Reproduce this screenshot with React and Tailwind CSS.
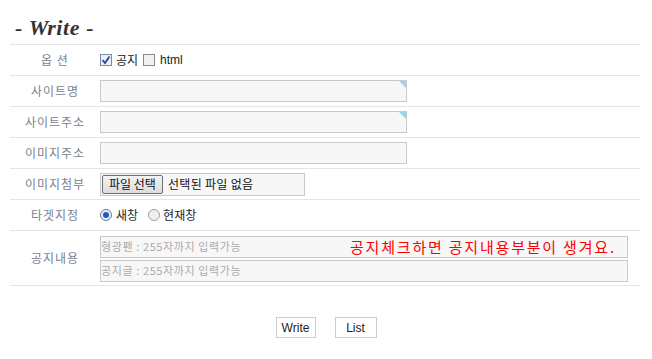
import React from "react";

const font = { fontFamily: '"Noto Sans CJK KR", "Noto Sans", sans-serif' };

function Row({ label, children, h = "h-[31px]" }) {
  return (
    <div className={`flex items-center border-b border-[#e5e5e5] ${h}`}>
      <div className="w-[90px] text-center text-[12px] text-[#7a8290] tracking-[1px]">{label}</div>
      <div className="flex-1 flex items-center">{children}</div>
    </div>
  );
}

function Field({ w = "w-[307px]", corner = false }) {
  return (
    <div className={`relative ${w} h-[22px] bg-[#f7f7f7] border border-[#c9c9c9]`}>
      {corner && (
        <div className="absolute top-0 right-0 w-0 h-0 border-t-[7px] border-t-[#8fd8f0] border-l-[7px] border-l-transparent" />
      )}
    </div>
  );
}

export default function App() {
  return (
    <div className="w-[652px] h-[359px] bg-white" style={font}>
      <div className="px-[10px]">
        <div className="h-[44px] pl-[5px] pt-[16px]">
          <span
            className="text-[22px] font-bold italic text-[#333] leading-none tracking-[0.6px]"
            style={{ fontFamily: '"Liberation Serif", serif' }}
          >
            - Write -
          </span>
        </div>
        <div className="w-[630px] border-t border-[#e5e5e5]">
          <Row label="옵 션">
            <div className="flex items-center text-[12px] text-[#222]">
              <span className="w-[12px] h-[12px] border border-[#7b8aa8] bg-[#eef1f8] flex items-center justify-center">
                <svg width="10" height="10" viewBox="0 0 10 10">
                  <path d="M1.5 5 L4 8 L8.5 1.5" stroke="#2a3f9a" strokeWidth="1.8" fill="none" />
                </svg>
              </span>
              <span className="ml-[4px]">공지</span>
              <span className="ml-[5px] w-[12px] h-[12px] border border-[#8a8a8a] bg-[#f0f0f0]" />
              <span className="ml-[5px]" style={{ fontFamily: '"Liberation Sans", sans-serif' }}>html</span>
            </div>
          </Row>
          <Row label="사이트명">
            <Field corner />
          </Row>
          <Row label="사이트주소">
            <Field corner />
          </Row>
          <Row label="이미지주소">
            <Field />
          </Row>
          <Row label="이미지첨부">
            <div className="w-[205px] h-[23px] bg-[#f7f7f7] border border-[#c9c9c9] flex items-center text-[12px] text-[#111]">
              <span className="ml-[1px] h-[19px] w-[61px] flex items-center justify-center border border-[#6f6f6f] rounded-[2px] bg-gradient-to-b from-[#f4f4f4] to-[#dcdcdc]">
                파일 선택
              </span>
              <span className="ml-[5px] tracking-[0.3px]">선택된 파일 없음</span>
            </div>
          </Row>
          <Row label="타겟지정">
            <div className="flex items-center text-[12px] text-[#222]">
              <span className="w-[12px] h-[12px] rounded-full border border-[#6b7f9f] bg-[#e8eef6] flex items-center justify-center">
                <span className="w-[6px] h-[6px] rounded-full bg-[#1d5fb0]" />
              </span>
              <span className="ml-[4px]">새창</span>
              <span className="ml-[10px] w-[12px] h-[12px] rounded-full border border-[#a0a0a0] bg-[#eee]" />
              <span className="ml-[3px]">현재창</span>
            </div>
          </Row>
          <Row label="공지내용" h="h-[55px]">
            <div className="flex flex-col gap-[2px] pt-[1px]">
              <div className="relative w-[528px] h-[22px] bg-[#f7f7f7] border border-[#c9c9c9] flex items-center text-[11px] text-[#aaa] tracking-[0.6px]">
                <span>형광펜 : 255자까지 입력가능</span>
                <span className="absolute left-[249px] top-[-1px] text-[15px] text-[#ff0000] whitespace-nowrap tracking-[1.8px]">
                  공지체크하면 공지내용부분이 생겨요.
                </span>
              </div>
              <div className="w-[528px] h-[22px] bg-[#f7f7f7] border border-[#c9c9c9] flex items-center text-[11px] text-[#aaa] tracking-[0.6px]">
                <span>공지글 : 255자까지 입력가능</span>
              </div>
            </div>
          </Row>
        </div>
        <div className="flex justify-center gap-[19px] pt-[31px] text-[12px] text-[#222]" style={{ fontFamily: '"Liberation Sans", sans-serif' }}>
          <div className="w-[40px] h-[21px] border border-[#ccc] flex items-center justify-center">Write</div>
          <div className="w-[42px] h-[21px] border border-[#ccc] flex items-center justify-center">List</div>
        </div>
      </div>
    </div>
  );
}
